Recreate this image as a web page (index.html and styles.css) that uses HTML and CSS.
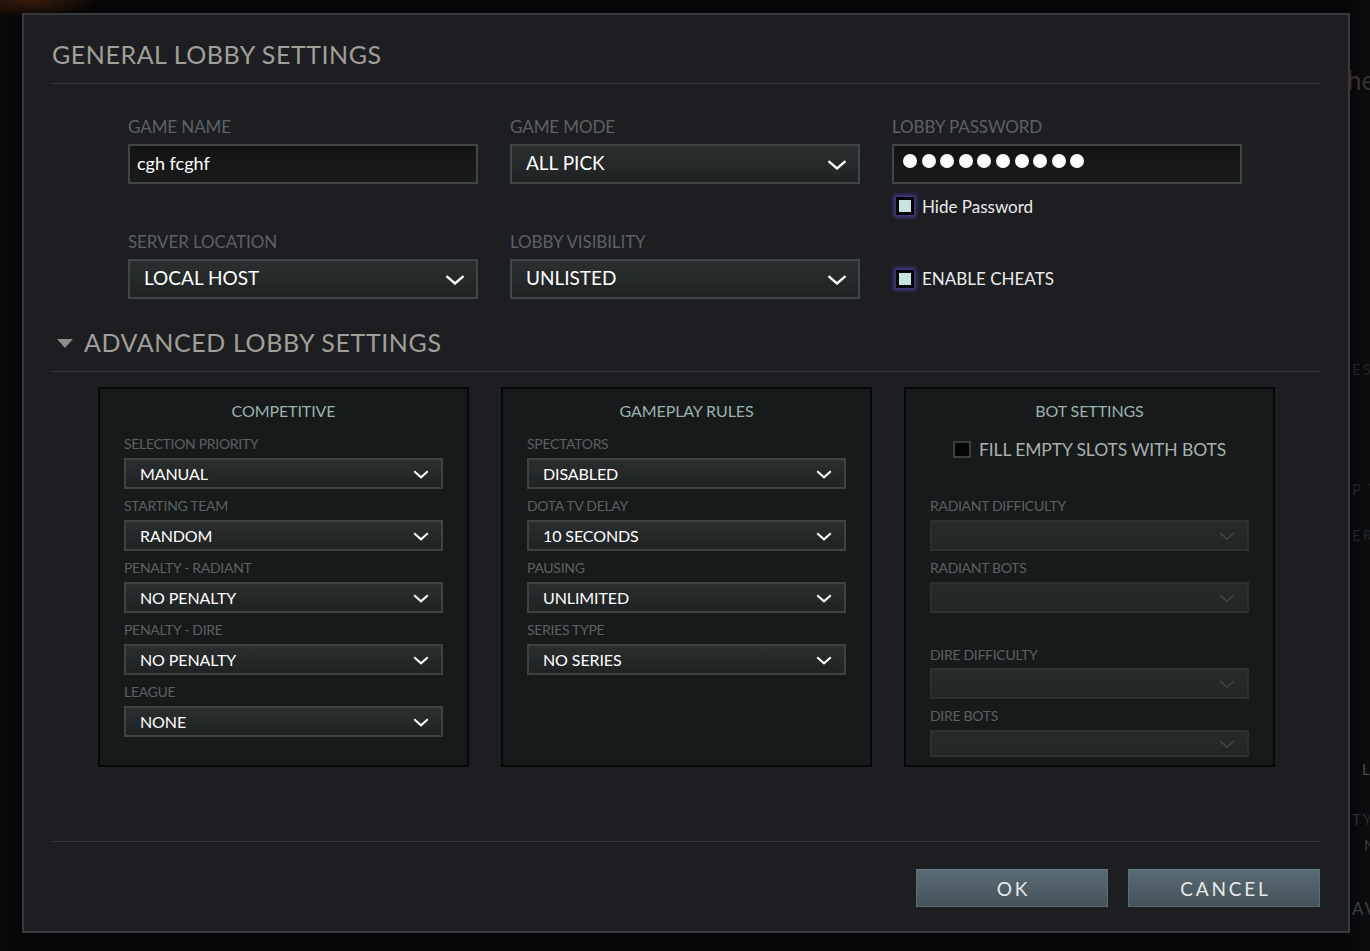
FILE: index.html
```html
<!DOCTYPE html>
<html>
<head>
<meta charset="utf-8">
<title>Lobby Settings</title>
<link rel="stylesheet" href="styles.css">
</head>
<body>
<div class="screen">
  <div class="bg-text bg-he">he</div>
  <div class="bg-text bg-es">ES</div>
  <div class="bg-text bg-pt">P T</div>
  <div class="bg-text bg-ers">ERS</div>
  <div class="bg-text bg-l">L</div>
  <div class="bg-text bg-ty">TY</div>
  <div class="bg-text bg-n">N</div>
  <div class="bg-text bg-av">AV</div>

  <div class="dialog">
    <div class="section-title">GENERAL LOBBY SETTINGS</div>

    <div class="general-grid">
      <div class="field">
        <div class="field-label">GAME NAME</div>
        <div class="text-input">cgh fcghf</div>
      </div>
      <div class="field">
        <div class="field-label">GAME MODE</div>
        <div class="select"><span>ALL PICK</span><svg class="chev" width="20" height="10" viewBox="0 0 20 10"><polyline points="1.5,1.2 10,8.5 18.5,1.2" fill="none" stroke="#ffffff" stroke-width="2.4"/></svg></div>
      </div>
      <div class="field">
        <div class="field-label">LOBBY PASSWORD</div>
        <div class="text-input pw"><span class="dot"></span><span class="dot"></span><span class="dot"></span><span class="dot"></span><span class="dot"></span><span class="dot"></span><span class="dot"></span><span class="dot"></span><span class="dot"></span><span class="dot"></span></div>
        <div class="check check-hide"><span class="box glow"></span><span class="check-text">Hide Password</span></div>
      </div>

      <div class="field">
        <div class="field-label">SERVER LOCATION</div>
        <div class="select"><span>LOCAL HOST</span><svg class="chev" width="20" height="10" viewBox="0 0 20 10"><polyline points="1.5,1.2 10,8.5 18.5,1.2" fill="none" stroke="#ffffff" stroke-width="2.4"/></svg></div>
      </div>
      <div class="field">
        <div class="field-label">LOBBY VISIBILITY</div>
        <div class="select"><span>UNLISTED</span><svg class="chev" width="20" height="10" viewBox="0 0 20 10"><polyline points="1.5,1.2 10,8.5 18.5,1.2" fill="none" stroke="#ffffff" stroke-width="2.4"/></svg></div>
      </div>
      <div class="field field-cheat">
        <div class="check check-cheat"><span class="box glow"></span><span class="check-text">ENABLE CHEATS</span></div>
      </div>
    </div>

    <div class="section-title adv"><span class="tri"></span><span>ADVANCED LOBBY SETTINGS</span></div>

    <div class="panels">
      <div class="panel">
        <div class="panel-title">COMPETITIVE</div>
        <div class="opt-label first">SELECTION PRIORITY</div>
        <div class="opt-select"><span>MANUAL</span><svg class="chev-s" width="16" height="9" viewBox="0 0 16 9"><polyline points="1.2,1.2 8,7.3 14.8,1.2" fill="none" stroke="#ffffff" stroke-width="2"/></svg></div>
        <div class="opt-label">STARTING TEAM</div>
        <div class="opt-select"><span>RANDOM</span><svg class="chev-s" width="16" height="9" viewBox="0 0 16 9"><polyline points="1.2,1.2 8,7.3 14.8,1.2" fill="none" stroke="#ffffff" stroke-width="2"/></svg></div>
        <div class="opt-label">PENALTY - RADIANT</div>
        <div class="opt-select"><span>NO PENALTY</span><svg class="chev-s" width="16" height="9" viewBox="0 0 16 9"><polyline points="1.2,1.2 8,7.3 14.8,1.2" fill="none" stroke="#ffffff" stroke-width="2"/></svg></div>
        <div class="opt-label">PENALTY - DIRE</div>
        <div class="opt-select"><span>NO PENALTY</span><svg class="chev-s" width="16" height="9" viewBox="0 0 16 9"><polyline points="1.2,1.2 8,7.3 14.8,1.2" fill="none" stroke="#ffffff" stroke-width="2"/></svg></div>
        <div class="opt-label">LEAGUE</div>
        <div class="opt-select"><span>NONE</span><svg class="chev-s" width="16" height="9" viewBox="0 0 16 9"><polyline points="1.2,1.2 8,7.3 14.8,1.2" fill="none" stroke="#ffffff" stroke-width="2"/></svg></div>
      </div>

      <div class="panel">
        <div class="panel-title">GAMEPLAY RULES</div>
        <div class="opt-label first">SPECTATORS</div>
        <div class="opt-select"><span>DISABLED</span><svg class="chev-s" width="16" height="9" viewBox="0 0 16 9"><polyline points="1.2,1.2 8,7.3 14.8,1.2" fill="none" stroke="#ffffff" stroke-width="2"/></svg></div>
        <div class="opt-label">DOTA TV DELAY</div>
        <div class="opt-select"><span>10 SECONDS</span><svg class="chev-s" width="16" height="9" viewBox="0 0 16 9"><polyline points="1.2,1.2 8,7.3 14.8,1.2" fill="none" stroke="#ffffff" stroke-width="2"/></svg></div>
        <div class="opt-label">PAUSING</div>
        <div class="opt-select"><span>UNLIMITED</span><svg class="chev-s" width="16" height="9" viewBox="0 0 16 9"><polyline points="1.2,1.2 8,7.3 14.8,1.2" fill="none" stroke="#ffffff" stroke-width="2"/></svg></div>
        <div class="opt-label">SERIES TYPE</div>
        <div class="opt-select"><span>NO SERIES</span><svg class="chev-s" width="16" height="9" viewBox="0 0 16 9"><polyline points="1.2,1.2 8,7.3 14.8,1.2" fill="none" stroke="#ffffff" stroke-width="2"/></svg></div>
      </div>

      <div class="panel">
        <div class="panel-title">BOT SETTINGS</div>
        <div class="bot-check"><span class="box plain"></span><span class="bot-check-text">FILL EMPTY SLOTS WITH BOTS</span></div>
        <div class="opt-label after-check">RADIANT DIFFICULTY</div>
        <div class="opt-select disabled"><span></span><svg class="chev-s" width="16" height="9" viewBox="0 0 16 9"><polyline points="1.2,1.2 8,7.3 14.8,1.2" fill="none" stroke="#3d4545" stroke-width="1.6"/></svg></div>
        <div class="opt-label">RADIANT BOTS</div>
        <div class="opt-select disabled"><span></span><svg class="chev-s" width="16" height="9" viewBox="0 0 16 9"><polyline points="1.2,1.2 8,7.3 14.8,1.2" fill="none" stroke="#3d4545" stroke-width="1.6"/></svg></div>
        <div class="opt-label group-gap">DIRE DIFFICULTY</div>
        <div class="opt-select disabled"><span></span><svg class="chev-s" width="16" height="9" viewBox="0 0 16 9"><polyline points="1.2,1.2 8,7.3 14.8,1.2" fill="none" stroke="#3d4545" stroke-width="1.6"/></svg></div>
        <div class="opt-label">DIRE BOTS</div>
        <div class="opt-select disabled short"><span></span><svg class="chev-s" width="16" height="9" viewBox="0 0 16 9"><polyline points="1.2,1.2 8,7.3 14.8,1.2" fill="none" stroke="#3d4545" stroke-width="1.6"/></svg></div>
      </div>
    </div>

    <div class="footer">
      <button class="btn">OK</button>
      <button class="btn">CANCEL</button>
    </div>
  </div>
</div>
</body>
</html>
```

FILE: styles.css
```css
html, body {
  margin: 0;
  padding: 0;
  background: #050607;
}

body {
  font-family: Lato, "Open Sans", "DejaVu Sans", sans-serif;
}

.screen {
  position: relative;
  width: 1370px;
  height: 951px;
  overflow: hidden;
  background:
    radial-gradient(ellipse 70px 18px at 30px 0px, rgba(110, 50, 15, 0.5), rgba(110, 50, 15, 0) 100%),
    linear-gradient(90deg, #0a0908 0px, #050607 22px, #050607 1345px, #0c0d0f 1370px);
}

.bg-text {
  position: absolute;
  left: 1352px;
  font-size: 15px;
  letter-spacing: 2px;
  white-space: nowrap;
  color: #202224;
}

.bg-he { top: 64px; left: 1347px; font-size: 26px; letter-spacing: 0; color: #3b2f2f; }
.bg-es { top: 360px; }
.bg-pt { top: 480px; }
.bg-ers { top: 526px; }
.bg-l { top: 760px; left: 1362px; color: #4a4c4e; }
.bg-ty { top: 810px; color: #2c2e30; }
.bg-n { top: 836px; left: 1364px; color: #3a3c3e; }
.bg-av { top: 898px; color: #3d3f41; font-size: 17px; }

.dialog {
  box-sizing: border-box;
  margin: 13px 0 0 22px;
  width: 1328px;
  height: 920px;
  border: 2px solid #393a3d;
  background: #1d1e21;
  padding: 24px 28px 0 28px;
}

.section-title {
  font-size: 25px;
  line-height: 30px;
  letter-spacing: 0.55px;
  color: #a29e9a;
  padding-bottom: 14px;
  border-bottom: 1px solid #37383b;
}

.general-grid {
  display: grid;
  grid-template-columns: repeat(3, 350px);
  column-gap: 32px;
  row-gap: 16px;
  margin: 33px 0 0 76px;
  align-items: start;
}

.field-label {
  font-size: 17px;
  line-height: 20px;
  color: #5e6164;
  margin-bottom: 7px;
  letter-spacing: -0.1px;
}

.text-input {
  box-sizing: border-box;
  height: 40px;
  border: 2px solid #3d4644;
  background: linear-gradient(#131313, #1b1b1b);
  color: #ffffff;
  font-size: 18px;
  padding: 0 0 3px 7px;
  display: flex;
  align-items: center;
}

.pw {
  padding-left: 9px;
  gap: 4.6px;
  padding-bottom: 6px;
}

.dot {
  width: 14px;
  height: 14px;
  border-radius: 50%;
  background: #ffffff;
  flex: none;
}

.select {
  box-sizing: border-box;
  height: 40px;
  border: 2px solid #3e4745;
  background: linear-gradient(#2b2f30, #1f2223);
  padding: 0 11px 3px 14px;
  display: flex;
  justify-content: space-between;
  align-items: center;
  color: #ffffff;
  font-size: 19px;
}

.chev {
  display: block;
  margin-top: 4px;
}

.check {
  display: flex;
  align-items: center;
  height: 20px;
}

.check-hide {
  margin-top: 12px;
  padding-left: 4px;
}

.field-cheat {
  padding-top: 27px;
}

.check-cheat {
  height: 40px;
  padding-left: 4px;
}

.check-cheat .check-text {
  margin-top: -2px;
}

.box {
  box-sizing: border-box;
  flex: none;
  width: 18px;
  height: 18px;
}

.box.glow {
  border: 3px solid #050505;
  background: #c8e4e2;
  box-shadow: 0 0 4px 2px rgba(88, 78, 200, 0.7);
}

.check-text {
  margin-left: 8px;
  font-size: 17px;
  color: #ececec;
}

.adv {
  margin-top: 28px;
  display: flex;
  align-items: center;
  letter-spacing: 0.6px;
}

.tri {
  width: 0;
  height: 0;
  border-left: 8px solid transparent;
  border-right: 8px solid transparent;
  border-top: 9px solid #8e8b88;
  margin: 2px 11px 0 5px;
}

.panels {
  display: flex;
  gap: 32px;
  margin: 15px 0 0 46px;
}

.panel {
  box-sizing: border-box;
  width: 371px;
  height: 380px;
  border: 2px solid #060707;
  background: #161a1a;
  padding: 12px 24px 0 24px;
}

.panel-title {
  text-align: center;
  font-size: 16px;
  line-height: 20px;
  color: #9ab2ad;
  letter-spacing: -0.1px;
}

.opt-label {
  font-size: 14px;
  line-height: 18px;
  color: #5c6061;
  margin: 8px 0 5px 0;
  letter-spacing: -0.3px;
}

.opt-label.first {
  margin-top: 14px;
}

.opt-label.after-check {
  margin-top: 37px;
}

.opt-label.group-gap {
  margin-top: 33px;
  margin-bottom: 4px;
}

.opt-select {
  box-sizing: border-box;
  height: 31px;
  border: 2px solid #3c4443;
  background: linear-gradient(#2a2e2f, #1f2223);
  padding: 0 12px 1px 14px;
  display: flex;
  justify-content: space-between;
  align-items: center;
  color: #ffffff;
  font-size: 16px;
  letter-spacing: -0.1px;
}

.opt-select.disabled {
  background: linear-gradient(#252a2a, #202525);
  border-color: #2b3131;
}

.opt-select.short {
  height: 27px;
}

.chev-s {
  display: block;
  margin-top: 2px;
}

.bot-check {
  margin-top: 17px;
  height: 22px;
  display: flex;
  align-items: center;
  justify-content: center;
}

.box.plain {
  width: 18px;
  height: 17px;
  border: 2px solid #3a3f3f;
  background: #050505;
}

.bot-check-text {
  margin-left: 8px;
  font-size: 17.5px;
  color: #a9b0ad;
  letter-spacing: -0.1px;
}

.footer {
  margin-top: 74px;
  border-top: 1px solid #37383b;
  padding-top: 27px;
  display: flex;
  justify-content: flex-end;
  gap: 20px;
}

.btn {
  box-sizing: border-box;
  width: 192px;
  height: 38px;
  border: 1px solid #5d6c73;
  border-top-color: #6f7f86;
  background: linear-gradient(#5b6b73, #44535a);
  color: #e8e8e8;
  font-family: Lato, "Open Sans", "DejaVu Sans", sans-serif;
  font-size: 19px;
  letter-spacing: 2.8px;
  padding: 0 0 0 2.8px;
  margin: 0;
}
```
